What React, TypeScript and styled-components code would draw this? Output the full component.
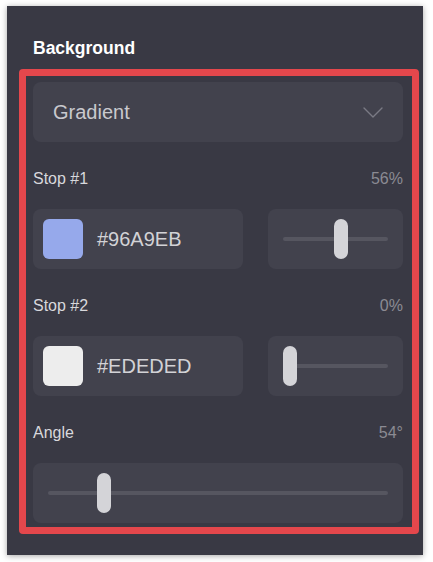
import React from "react";
import styled, { createGlobalStyle } from "styled-components";

const GlobalStyle = createGlobalStyle`
  html, body {
    margin: 0;
    padding: 0;
    background: #ffffff;
    font-family: "Liberation Sans", Arial, sans-serif;
  }
`;

type Stop = {
  label: string;
  color: string;
  position: number;
};

const stops: Stop[] = [
  { label: "Stop #1", color: "#96A9EB", position: 56 },
  { label: "Stop #2", color: "#EDEDED", position: 0 },
];

const angle = 54;

function Slider({ value }: { value: number }) {
  return (
    <Track>
      <Thumb style={{ left: `calc((100% - 14px) * ${value})` }} />
    </Track>
  );
}

export default function App() {
  return (
    <>
      <GlobalStyle />
      <Page>
        <Panel>
          <Title>Background</Title>
          <Highlight>
            <Dropdown>
              <DropdownText>Gradient</DropdownText>
              <svg width="20" height="11" viewBox="0 0 20 11" fill="none">
                <path
                  d="M1 1 L10 10 L19 1"
                  stroke="#7a7a84"
                  strokeWidth="1.4"
                  strokeLinecap="round"
                  strokeLinejoin="round"
                />
              </svg>
            </Dropdown>

            {stops.map((stop) => (
              <React.Fragment key={stop.label}>
                <LabelRow>
                  <Label>{stop.label}</Label>
                  <Value>{stop.position}%</Value>
                </LabelRow>
                <StopRow>
                  <ColorField>
                    <Swatch $color={stop.color} />
                    <HexText>{stop.color}</HexText>
                  </ColorField>
                  <SliderBox>
                    <Slider value={stop.position / 100} />
                  </SliderBox>
                </StopRow>
              </React.Fragment>
            ))}

            <LabelRow>
              <Label>Angle</Label>
              <Value>{angle}°</Value>
            </LabelRow>
            <SliderBox>
              <Slider value={angle / 360} />
            </SliderBox>
          </Highlight>
        </Panel>
      </Page>
    </>
  );
}

const Page = styled.div`
  padding: 6px 10px 7px 7px;
`;

const Panel = styled.div`
  width: 416px;
  box-sizing: border-box;
  background: #393944;
  padding: 32px 4px 21px 12px;
  box-shadow: 0 1px 6px rgba(0, 0, 0, 0.35);
`;

const Title = styled.div`
  padding-left: 14px;
  font-size: 17.5px;
  line-height: 20px;
  font-weight: 700;
  color: #ffffff;
  margin-bottom: 11px;
`;

const Highlight = styled.div`
  border: 7px solid #e4474c;
  border-radius: 4px;
  padding: 6px 9px 4px 7px;
  display: flex;
  flex-direction: column;
`;

const Dropdown = styled.div`
  height: 60px;
  border-radius: 8px;
  background: #42424d;
  display: flex;
  align-items: center;
  justify-content: space-between;
  padding: 0 20px 0 20px;
  box-sizing: border-box;
`;

const DropdownText = styled.span`
  font-size: 20px;
  color: #c9c9ce;
`;

const LabelRow = styled.div`
  display: flex;
  justify-content: space-between;
  align-items: center;
  height: 20px;
  margin: 27px 0 20px;
`;

const Label = styled.span`
  font-size: 16px;
  color: #d8d8dc;
`;

const Value = styled.span`
  font-size: 16px;
  color: #8b8b93;
`;

const StopRow = styled.div`
  display: grid;
  grid-template-columns: 210px 1fr;
  gap: 25px;
`;

const ColorField = styled.div`
  height: 60px;
  border-radius: 8px;
  background: #42424d;
  display: flex;
  align-items: center;
  gap: 14px;
  padding: 0 10px;
  box-sizing: border-box;
`;

const Swatch = styled.div<{ $color: string }>`
  width: 40px;
  height: 40px;
  border-radius: 6px;
  background: ${(p) => p.$color};
  flex-shrink: 0;
`;

const HexText = styled.span`
  font-size: 20px;
  color: #d2d2d6;
`;

const SliderBox = styled.div`
  height: 60px;
  border-radius: 8px;
  background: #42424d;
  display: flex;
  align-items: center;
  padding: 0 15px;
  box-sizing: border-box;
`;

const Track = styled.div`
  position: relative;
  flex: 1;
  height: 4px;
  border-radius: 2px;
  background: #565660;
`;

const Thumb = styled.div`
  position: absolute;
  top: 50%;
  width: 14px;
  height: 40px;
  margin-top: -20px;
  border-radius: 7px;
  background: #d4d4d8;
`;
